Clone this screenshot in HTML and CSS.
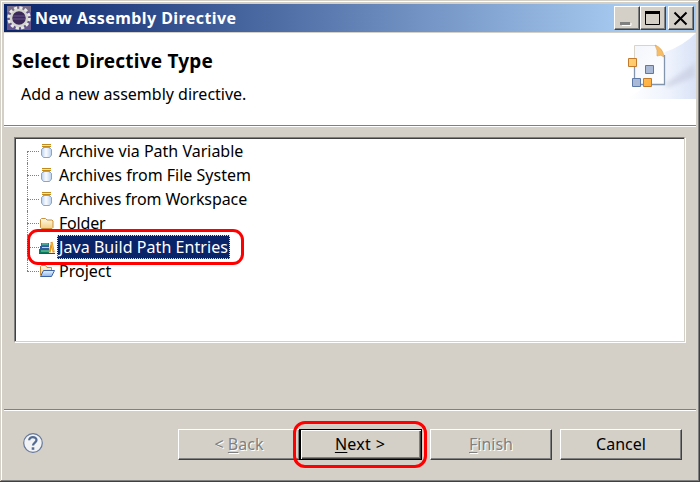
FILE: index.html
```html
<!DOCTYPE html>
<html lang="en">
<head>
<meta charset="utf-8">
<title>New Assembly Directive</title>
<link rel="stylesheet" href="styles.css">
</head>
<body>
<svg width="0" height="0" class="defs">
  <defs>
    <linearGradient id="glass" x2="1"><stop stop-color="#b9cfee"/><stop offset=".45" stop-color="#fafcff"/><stop offset="1" stop-color="#b9cfee"/></linearGradient>
    <linearGradient id="fold" x2="0" y2="1"><stop stop-color="#fffbe8"/><stop offset="1" stop-color="#f4cf83"/></linearGradient>
    <linearGradient id="blue" x2="0" y2="1"><stop stop-color="#e8f3ff"/><stop offset="1" stop-color="#8db6e8"/></linearGradient>
    <symbol id="jar" viewBox="0 0 16 16">
      <path d="M4.500 4.500h6l2 2v5.500l-2 2.500h-6l-2-2.500V6.500z" fill="url(#glass)" stroke="#8fa4c2"/>
      <path d="M3 1.500h9M3 3.500h9" stroke="#c08a1c"/><path d="M3 2.500h9" stroke="#ffe799"/><path d="M4.500 4v1.500M10.500 4v1.500" stroke="#c9a040"/>
    </symbol>
    <symbol id="folder" viewBox="0 0 16 16">
      <path d="M1.500 12.500v-8l1-1h4l1.500 1.500h5l1 1v6.500l-1 1h-10.500z" fill="url(#fold)" stroke="#c9913e"/>
    </symbol>
    <symbol id="books" viewBox="0 0 16 16">
      <path d="M2 4h8v3H2z" fill="#16877d"/><path d="M3 5h6" stroke="#7cc4b3"/>
      <path d="M1 7h9v3H1z" fill="#315b9a"/><path d="M3 8.500h7" stroke="#b9d6e7"/>
      <path d="M0 10h10v4H0z" fill="#087b61"/><path d="M2 12h8" stroke="#8bd5a8"/>
      <path d="M10.500 13.500l2-8" stroke="#e7961d" stroke-width="2"/><path d="M12.500 3l2.200 10.500" stroke="#e7961d" stroke-width="2.200"/><path d="M12.600 4l1.800 8" stroke="#ffd36b" stroke-width=".7"/><path d="M0 14.500h16" stroke="#713f1e"/>
    </symbol>
    <symbol id="project" viewBox="0 0 16 16">
      <path d="M1.500 12V3.500l1-1h4l1.500 2h4.500v3" fill="url(#fold)" stroke="#c58c35"/>
      <path d="M1.500 13.500l3-6h11l-3 6z" fill="url(#blue)" stroke="#3c63a5"/>
    </symbol>
  </defs>
</svg>
<div class="window">
  <header class="titlebar">
    <svg class="app-icon" viewBox="0 0 24 24">
      <path d="M0 0h24v24H0z" fill="#65558c"/><path d="M0 0h24v6H0z" fill="#786d89"/>
      <circle cx="12" cy="12" r="9.700" fill="none" stroke="#e9e9e4" stroke-width="4" stroke-dasharray="3 2.080"/>
      <circle cx="12" cy="12" r="8" fill="#3a2959" stroke="#d4d4cf" stroke-width="2.500"/>
      <path d="M6 10h12M6 13h12" stroke="#67528d"/>
    </svg>
    <span class="title">New Assembly Directive</span>
    <div class="controls">
      <button class="ctl" aria-label="Minimize"><svg viewBox="0 0 24 22"><path d="M7 18.500h9V16" fill="none" stroke="#fff"/><path d="M5 16.500h10" stroke="#808080" stroke-width="3"/></svg></button>
      <button class="ctl" aria-label="Maximize"><svg viewBox="0 0 24 22"><path d="M4.500 5v12.500h14V5" fill="none" stroke="#000"/><path d="M4 5.500h15" stroke="#000" stroke-width="3"/></svg></button>
      <button class="ctl close" aria-label="Close"><svg viewBox="0 0 24 22"><path d="M5.500 5.500l12 12m0-12l-12 12" stroke="#000" stroke-width="2"/></svg></button>
    </div>
  </header>
  <section class="banner">
    <div><h1><span>Select Directive Type</span></h1><p><span>Add a new assembly directive.</span></p></div>
    <svg class="banner-art" viewBox="0 0 75 66">
      <defs>
        <linearGradient id="sky" x1="0" x2="1"><stop offset=".1" stop-color="#fff"/><stop offset=".65" stop-color="#edf2fc"/><stop offset="1" stop-color="#d9e3f7"/></linearGradient>
        <linearGradient id="paper" x2="1" y2="1"><stop stop-color="#f3f6fc"/><stop offset="1" stop-color="#fff"/></linearGradient>
        <linearGradient id="orange" x2="1" y2="1"><stop stop-color="#ffd277"/><stop offset="1" stop-color="#ffaf3c"/></linearGradient>
        <filter id="soft"><feGaussianBlur stdDeviation="2"/></filter>
      </defs>
      <path d="M75 0v66H0Q14 63 24 53L44 19Q62 13 75 0" fill="url(#sky)"/>
      <path d="M43 52L74 30V44L48 54z" fill="#c8cce0" opacity=".65" filter="url(#soft)"/>
      <path d="M13.500 12.500h22l8 10v29h-30z" fill="url(#paper)"/>
      <path d="M13.500 34V12.500h22" fill="none" stroke="#d9d4c7"/>
      <path d="M13.500 34v17.500h30V22" fill="none" stroke="#8295ad" stroke-width="1.300"/>
      <path d="M34 12q8 3 9 12-3-3-7-1 1-6-2-11" fill="#f6bd66" stroke="#dc9d4c" stroke-width=".6"/>
      <path d="M7.500 25.500h8v8h-8zM22.500 45.500h8v8h-8z" fill="url(#orange)" stroke="#c27b2d"/>
      <path d="M24.500 32.500h8v8h-8zM11.500 45.500h8v8h-8z" fill="#a9b9d6" stroke="#5c79a8"/>
    </svg>
  </section>
  <main>
    <ul class="tree">
      <li><svg><use href="#jar"/></svg><span class="label">Archive via Path Variable</span></li>
      <li><svg><use href="#jar"/></svg><span class="label">Archives from File System</span></li>
      <li><svg><use href="#jar"/></svg><span class="label workspace">Archives from Workspace</span></li>
      <li><svg><use href="#folder"/></svg><span class="label folder">Folder</span></li>
      <li class="marked"><svg><use href="#books"/></svg><span class="label selected">Java Build Path Entries</span></li>
      <li><svg><use href="#project"/></svg><span class="label">Project</span></li>
    </ul>
  </main>
  <footer>
    <svg class="help" viewBox="0 0 20 20"><circle cx="10" cy="10" r="9.300" fill="#f2f3f4" stroke="#64789c" stroke-width="1.200"/><path d="M6.200 7.200C6.200 3 13.600 3.200 13.500 7.100 13.500 9.500 10 9.700 10 12.600" fill="none" stroke="#536b94" stroke-width="2.300"/><path d="M8.700 14.300h2.600v2.500H8.700z" fill="#536b94"/></svg>
    <div class="buttons">
      <button class="btn disabled" disabled><span>&lt; <u>B</u>ack</span></button>
      <button class="btn primary"><span><u>N</u>ext &gt;</span></button>
      <button class="btn disabled" disabled><span><u>F</u>inish</span></button>
      <button class="btn"><span>Cancel</span></button>
    </div>
  </footer>
</div>
</body>
</html>
```

FILE: styles.css
```css
*, *::before, *::after { box-sizing: border-box; }
body { margin: 0; font: 16px/24px "Noto Sans", sans-serif; color: #000; }
.defs { position: absolute; }
svg { display: block; flex: none; }
button { font: inherit; color: inherit; padding: 0; border: 0; }
.window {
  width: 700px; height: 482px; padding: 4px; background: #d4d0c8;
  display: flex; flex-direction: column;
  box-shadow: inset -1px -1px #404040, inset 1px 1px #d4d0c8, inset -2px -2px #808080, inset 2px 2px #fff;
}
.titlebar {
  height: 28px; flex: none; display: flex; align-items: center; padding: 0 2px 0 3px;
  background: linear-gradient(90deg, #0a246a, #a6caf0 90%);
}
.app-icon { width: 24px; height: 24px; }
.title { margin-left: 4px; color: #fff; font-weight: 700; font-size: 16px; letter-spacing: .43px; white-space: nowrap; }
.controls { display: flex; margin-left: auto; }
.ctl { width: 26px; height: 24px; background: #d4d0c8; border: 1px solid; border-color: #fff #404040 #404040 #fff; box-shadow: inset -1px -1px #808080; }
.ctl svg { width: 24px; height: 22px; }
.close { margin-left: 2px; }
.banner { height: 92px; flex: none; margin-top: 1px; background: #fff; display: flex; justify-content: space-between; }
.banner h1 { margin: 15px 0 0 8px; font-size: 19px; line-height: 26px; font-weight: 700; letter-spacing: .22px; }
.banner p { margin: 8px 0 0 17px; }
.banner-art { width: 75px; height: 66px; }
main { height: 284px; flex: none; padding: 11px 10px 0; border-top: 1px solid #808080; box-shadow: inset 0 1px #fff; }
.tree {
  height: 205px; margin: 0 1px 0 0; padding: 0 0 0 11px; list-style: none; background: #fff;
  border: 2px solid; border-color: #808080 #d4d0c8 #d4d0c8 #808080; border-right-width: 1px; border-bottom-width: 1px;
  border-top-width: 1px; border-left-width: 1px; padding: 1px 0 0 12px;
  box-shadow: inset 1px 1px #404040, 1px 1px #fff;
}
.tree li { height: 24px; display: flex; align-items: center; position: relative; }
.tree li::before { content: ""; width: 12px; flex: none; border-top: 1px dotted #808080; }
.tree li::after { content: ""; position: absolute; left: 0; top: 0; height: 24px; border-left: 1px dotted #808080; }
.tree li:first-child::after { top: 12px; height: 12px; }
.tree li:last-child::after { height: 12px; }
.tree svg { width: 16px; height: 16px; }
.label { height: 24px; margin-left: 2px; padding: 0 2px; white-space: nowrap; }
.workspace { letter-spacing: -.1px; }
.folder { letter-spacing: -.2px; }
.selected { width: 173px; letter-spacing: .06px; background: #0a246a; color: #fff; outline: 1px dotted #f5db95; outline-offset: -1px; }
.marked { z-index: 1; }
.marked .label::after {
  content: ""; position: absolute; left: 0; top: -6px; width: 217px; height: 36px;
  border: 3px solid #f00; border-radius: 11px;
}
footer { height: 69px; flex: none; border-top: 1px solid #808080; box-shadow: inset 0 1px #fff; display: flex; justify-content: space-between; padding: 19px 14px 0 19px; }
.help { width: 20px; height: 20px; margin-top: 4px; }
.buttons { display: flex; gap: 8px; }
.btn { width: 122px; height: 31px; position: relative; background: #d4d0c8; border: 1px solid; border-color: #fff #404040 #404040 #fff; box-shadow: inset -1px -1px #808080; }
.btn span { position: relative; top: -1px; }
.btn u { text-underline-offset: 2px; text-decoration-thickness: 1px; }
.disabled { color: #808080; text-shadow: 1px 1px #fff; }
.primary { z-index: 1; padding-right: 2px; letter-spacing: .3px; border-color: #000; box-shadow: inset 1px 1px #fff, inset -1px -1px #404040, inset -2px -2px #808080, -1px 0 #000; }
.primary::after { content: ""; position: absolute; left: -8px; top: -9px; width: 134px; height: 47px; border: 3px solid #f00; border-radius: 12px; }
.buttons .btn:first-child { margin-right: -8px; }
```
